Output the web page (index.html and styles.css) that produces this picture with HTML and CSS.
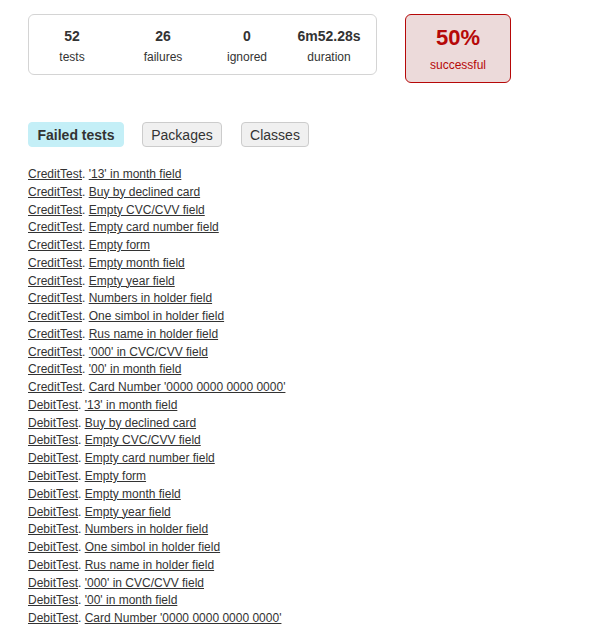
FILE: index.html
```html
<!DOCTYPE html>
<html>
<head>
<meta charset="utf-8">
<link rel="stylesheet" href="styles.css">
</head>
<body>
<div class="page">
  <div class="summary">
    <div class="summary-box">
      <div class="cell c1"><div class="counter">52</div><div class="label">tests</div></div>
      <div class="cell c2"><div class="counter">26</div><div class="label">failures</div></div>
      <div class="cell c3"><div class="counter">0</div><div class="label">ignored</div></div>
      <div class="cell c4"><div class="counter">6m52.28s</div><div class="label">duration</div></div>
    </div>
    <div class="rate-box">
      <div class="percent">50%</div>
      <div class="label">successful</div>
    </div>
  </div>
  <div class="tabs">
    <span class="tab active tab-failed">Failed tests</span>
    <span class="tab tab-packages">Packages</span>
    <span class="tab tab-classes">Classes</span>
  </div>
  <ul class="list">
    <li><a href="#">CreditTest</a>. <a href="#">'13' in month field</a></li>
    <li><a href="#">CreditTest</a>. <a href="#">Buy by declined card</a></li>
    <li><a href="#">CreditTest</a>. <a href="#">Empty CVC/CVV field</a></li>
    <li><a href="#">CreditTest</a>. <a href="#">Empty card number field</a></li>
    <li><a href="#">CreditTest</a>. <a href="#">Empty form</a></li>
    <li><a href="#">CreditTest</a>. <a href="#">Empty month field</a></li>
    <li><a href="#">CreditTest</a>. <a href="#">Empty year field</a></li>
    <li><a href="#">CreditTest</a>. <a href="#">Numbers in holder field</a></li>
    <li><a href="#">CreditTest</a>. <a href="#">One simbol in holder field</a></li>
    <li><a href="#">CreditTest</a>. <a href="#">Rus name in holder field</a></li>
    <li><a href="#">CreditTest</a>. <a href="#">'000' in CVC/CVV field</a></li>
    <li><a href="#">CreditTest</a>. <a href="#">'00' in month field</a></li>
    <li><a href="#">CreditTest</a>. <a href="#">Card Number '0000 0000 0000 0000'</a></li>
    <li><a href="#">DebitTest</a>. <a href="#">'13' in month field</a></li>
    <li><a href="#">DebitTest</a>. <a href="#">Buy by declined card</a></li>
    <li><a href="#">DebitTest</a>. <a href="#">Empty CVC/CVV field</a></li>
    <li><a href="#">DebitTest</a>. <a href="#">Empty card number field</a></li>
    <li><a href="#">DebitTest</a>. <a href="#">Empty form</a></li>
    <li><a href="#">DebitTest</a>. <a href="#">Empty month field</a></li>
    <li><a href="#">DebitTest</a>. <a href="#">Empty year field</a></li>
    <li><a href="#">DebitTest</a>. <a href="#">Numbers in holder field</a></li>
    <li><a href="#">DebitTest</a>. <a href="#">One simbol in holder field</a></li>
    <li><a href="#">DebitTest</a>. <a href="#">Rus name in holder field</a></li>
    <li><a href="#">DebitTest</a>. <a href="#">'000' in CVC/CVV field</a></li>
    <li><a href="#">DebitTest</a>. <a href="#">'00' in month field</a></li>
    <li><a href="#">DebitTest</a>. <a href="#">Card Number '0000 0000 0000 0000'</a></li>
  </ul>
</div>
</body>
</html>
```

FILE: styles.css
```css
* { box-sizing: border-box; }
body {
  margin: 0;
  font-family: "Liberation Sans", Arial, sans-serif;
  color: #333333;
  background: #ffffff;
}
.page {
  padding: 14px 0 0 28px;
}
.summary {
  display: flex;
  align-items: flex-start;
}
.summary-box {
  display: flex;
  width: 349px;
  height: 61px;
  border: 1px solid #d4d4d4;
  border-radius: 6px;
  padding-top: 13px;
}
.cell {
  text-align: center;
}
.c1 { width: 86px; }
.c2 { width: 96px; }
.c3 { width: 72px; }
.c4 { width: 92px; }
.counter {
  font-size: 14px;
  font-weight: bold;
  line-height: 16px;
}
.label {
  font-size: 12px;
  line-height: 14px;
  margin-top: 6px;
}
.rate-box {
  margin-left: 28px;
  width: 106px;
  height: 69px;
  border: 1px solid #b60808;
  border-radius: 6px;
  background: #ecdada;
  color: #b60808;
  text-align: center;
  padding-top: 10px;
}
.percent {
  font-size: 22px;
  font-weight: bold;
  line-height: 26px;
}
.rate-box .label {
  margin-top: 7px;
}
.tabs {
  display: flex;
  gap: 18px;
  margin-top: 39px;
}
.tab {
  font-size: 14px;
  line-height: 24px;
  height: 25px;
  text-align: center;
  border: 1px solid #cccccc;
  border-radius: 4px;
  background: #f0f0f0;
  color: #333333;
}
.tab.active {
  font-weight: bold;
  background: #c4eff7;
  border-color: #c4eff7;
}
.tab-failed { width: 96px; }
.tab-packages { width: 80px; }
.tab-classes { width: 68px; margin-left: 1px; }
.list {
  list-style: none;
  margin: 21px 0 0 0;
  padding: 0;
}
.list li {
  font-size: 12px;
  line-height: 13.76px;
  margin-bottom: 4px;
}
.list a {
  color: #333333;
  text-decoration: underline;
}
```
